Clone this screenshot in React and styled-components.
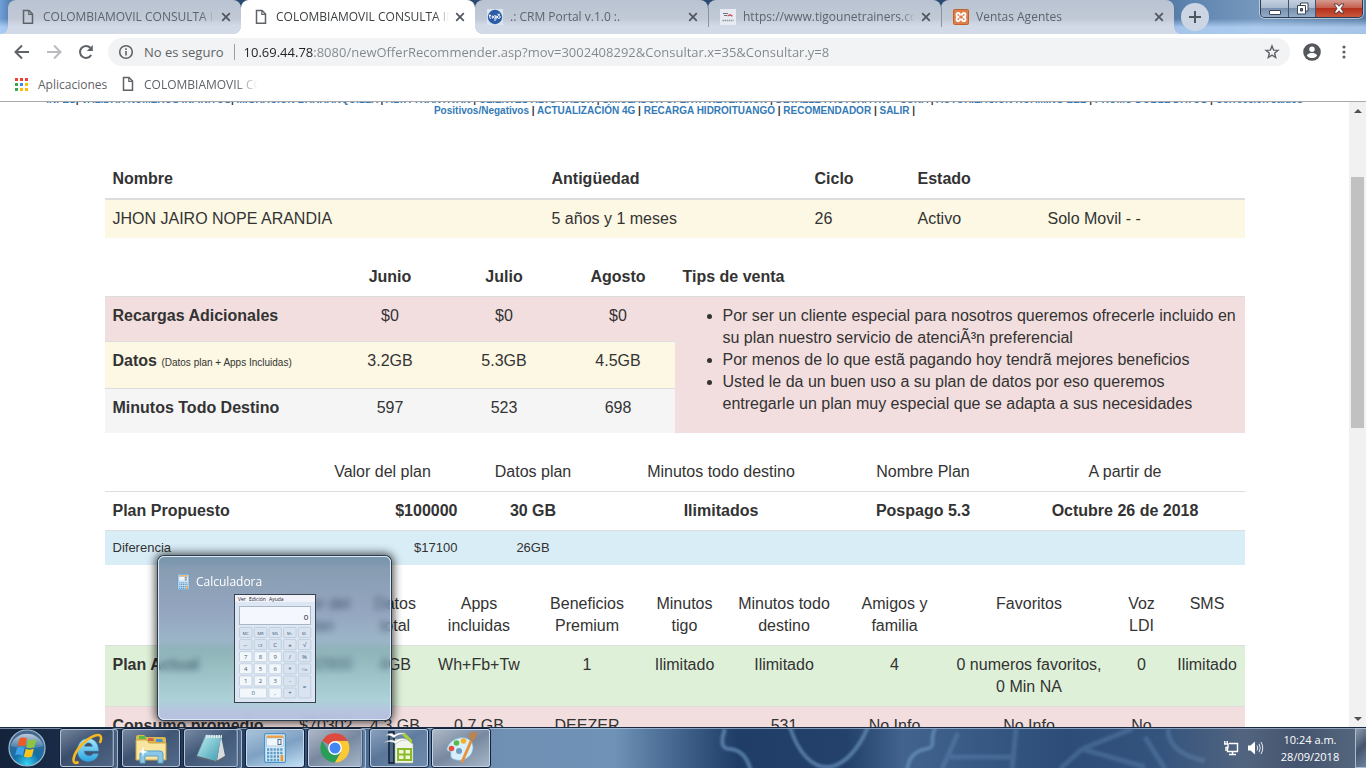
import React from 'react';
import styled, { createGlobalStyle, css } from 'styled-components';

const UI = '"Open Sans", "Noto Sans", sans-serif';
const PAGE = '"Liberation Sans", Arial, sans-serif';

const GlobalStyle = createGlobalStyle`
  * { box-sizing: border-box; }
  body { margin: 0; background: #fff; overflow: hidden; }
  button { border: 0; padding: 0; background: none; font: inherit; color: inherit; }
  svg { flex: none; }
`;

const Desktop = styled.div`
  display: flex;
  flex-direction: column;
  height: 100vh;
  font-family: ${UI};
`;

/* ---------- window frame ---------- */

const Frame = styled.header`
  display: flex;
  height: 34px;
  flex: none;
  padding-left: 8px;
  background:
    linear-gradient(to bottom, transparent 55%, rgba(190, 220, 255, 0.75) 80%),
    linear-gradient(to right, #6f9fd8 0, #2b4a72 2%, #2b4a72 80%, #5d84b0 87%, #7698bd 92%, #5a7ca4 100%);
`;

const TabBox = styled.div`
  position: relative;
  display: flex;
  align-items: center;
  flex: 0 1 233px;
  min-width: 0;
  height: 34px;
  padding: 0 7px 0 14px;
  border-radius: 8px 8px 0 0;
  color: #5c6470;
  --tab: #d3dae7;
  background: linear-gradient(to bottom, #b9c3d2, #c1c9d6 55%, #d3dae7 75%);
  ${(p) => p.$active && css`
    --tab: #fff;
    z-index: 1;
    flex-basis: 234px;
    color: #3c4043;
    background: #fff;
  `}
  &::before, &::after {
    content: '';
    position: absolute;
    bottom: 0;
    width: 8px;
    height: 8px;
  }
  &::before { left: -8px; background: radial-gradient(circle at 0 0, transparent 8px, var(--tab) 8px); }
  &::after { right: -8px; background: radial-gradient(circle at 100% 0, transparent 8px, var(--tab) 8px); }
`;

const TabIcon = styled.span`
  display: flex;
  justify-content: center;
  width: 16px;
  flex: none;
  margin-left: -2px;
`;

const TabTitle = styled.button`
  flex: 1;
  min-width: 0;
  margin-left: 7px;
  overflow: hidden;
  white-space: nowrap;
  text-align: left;
  font-size: 12px;
  line-height: 20px;
  mask-image: linear-gradient(to right, #000 calc(100% - 14px), transparent);
`;

const TabClose = styled.button`
  display: flex;
  justify-content: center;
  width: 16px;
  margin-left: 3px;
`;

const TabDivider = styled.span`
  align-self: center;
  width: 1px;
  height: 20px;
  margin-right: -1px;
  flex: none;
  z-index: 2;
  background: #8a929e;
`;

const NewTab = styled.button`
  display: flex;
  align-items: center;
  justify-content: center;
  width: 28px;
  height: 28px;
  margin: 3px 0 0 7px;
  flex: none;
  border-radius: 50%;
  background: #ccd5e3;
`;

const WindowButtons = styled.div`
  display: flex;
  height: 18px;
  margin: 0 3px 0 auto;
  border: 1px solid #2b3d55;
  border-top: 0;
  border-radius: 0 0 5px 5px;
  overflow: hidden;
  box-shadow: 0 0 0 1px rgba(255, 255, 255, 0.5);
`;

const WindowButton = styled.button`
  display: flex;
  align-items: center;
  justify-content: center;
  width: ${(p) => (p.$close ? 47 : 27)}px;
  border-left: 1px solid #42546c;
  background: ${(p) =>
    p.$close
      ? 'linear-gradient(to bottom, #d59a90, #c5604f 45%, #b5301b 50%, #c9573a 100%)'
      : 'linear-gradient(to bottom, #c4d0df, #a9bacf 45%, #7890ae 50%, #93acc9 100%)'};
  &:first-child { border-left: 0; }
`;

/* ---------- toolbar ---------- */

const Toolbar = styled.div`
  display: flex;
  align-items: center;
  gap: 12px;
  flex: none;
  height: 36px;
  padding: 0 12px;
  background: #fff;
`;

const IconButton = styled.button`
  display: flex;
  align-items: center;
  justify-content: center;
  width: 20px;
  height: 20px;
  flex: none;
`;

const Omnibox = styled.div`
  display: flex;
  align-items: center;
  flex: 1;
  height: 28px;
  padding: 0 10px;
  border-radius: 14px;
  background: #f1f3f4;
  font-size: 13px;
  color: #5f6368;
`;

const Security = styled.span`
  margin-left: 10px;
  padding-right: 10px;
  border-right: 1px solid #9aa0a6;
  line-height: 16px;
  white-space: nowrap;
`;

const Address = styled.input`
  flex: 1;
  min-width: 0;
  height: 20px;
  margin-left: 9px;
  padding: 0;
  border: 0;
  outline: 0;
  font-family: ${UI};
  font-size: 13px;
  color: transparent;
  background: linear-gradient(to right, #202124 70px, #80868b 70px);
  background-clip: text;
`;

const Bookmarks = styled.nav`
  display: flex;
  align-items: center;
  flex: none;
  height: 32px;
  padding: 0 15px 3px;
  border-bottom: 1px solid #a9a9ad;
  background: #fff;
`;

const Bookmark = styled.a`
  display: flex;
  align-items: center;
  gap: 10px;
  width: ${(p) => (p.$page ? 136 : 107)}px;
  overflow: hidden;
  white-space: nowrap;
  font-size: 12px;
  color: #5f6368;
  text-decoration: none;
  ${(p) => p.$page && css`mask-image: linear-gradient(to right, #000 114px, transparent 136px);`}
`;

/* ---------- page ---------- */

const Viewport = styled.div`
  display: flex;
  flex: 1;
  min-height: 0;
`;

const Page = styled.main`
  flex: 1;
  min-width: 0;
  overflow: hidden;
  background: #fff;
  color: #333;
  font-family: ${PAGE};
  font-size: 16px;
  line-height: 22px;
`;

const SiteMenu = styled.nav`
  margin-top: -8px;
  padding: 0 40px;
  text-align: center;
  font-size: 10px;
  line-height: 11px;
  font-weight: bold;
  color: #333;
`;

const SiteLink = styled.a`
  color: #337ab7;
  text-decoration: none;
`;

const Container = styled.div`
  max-width: 1140px;
  margin: 44px auto 0;
`;

const Table = styled.table`
  width: 100%;
  margin-bottom: 20px;
  table-layout: fixed;
  border-collapse: separate;
  border-spacing: 0;
`;

const Col = styled.col`
  width: ${(p) => (p.$w / 1140) * 100}%;
`;

const TONES = {
  yellow: '#fcf8e3',
  red: '#f2dede',
  gray: '#f5f5f5',
  blue: '#d9edf7',
  green: '#dff0d8',
};

const Row = styled.tr`
  background: ${(p) => TONES[p.$tone] || 'transparent'};
  ${(p) => p.$small && css`font-size: 13px; line-height: 18px;`}
`;

const cell = css`
  padding: 8px 7px 8px 8px;
  vertical-align: top;
  text-align: ${(p) => p.$align || 'center'};
`;

const Th = styled.th`
  ${cell}
  font-weight: ${(p) => (p.$plain ? 'normal' : 'bold')};
  ${(p) => p.$rule && css`border-bottom: 2px solid #ddd;`}
`;

const Td = styled.td`
  ${cell}
  ${(p) => !p.$flush && css`border-top: 1px solid #ddd;`}
  ${(p) => p.$bold && css`font-weight: bold;`}
  ${(p) => p.$tone && css`background: ${TONES[p.$tone]};`}
`;

const RowHead = styled(Td).attrs({ as: 'th', scope: 'row', $align: 'left' })`
  font-weight: ${(p) => (p.$plain ? 'normal' : 'bold')};
`;

const Note = styled.small`
  font-size: 10px;
  font-weight: normal;
`;

const Tips = styled.ul`
  margin: 0 0 10px;
  padding-left: 40px;
`;

const Scrollbar = styled.div`
  display: flex;
  flex-direction: column;
  align-items: center;
  width: 17px;
  flex: none;
  background: #f1f1f1;
`;

const Arrow = styled.button`
  display: flex;
  align-items: center;
  justify-content: center;
  width: 17px;
  height: 17px;
`;

const Track = styled.div`
  flex: 1;
  width: 13px;
  padding-top: 58px;
`;

const Thumb = styled.div`
  height: 47%;
  background: #c1c1c1;
`;

/* ---------- taskbar ---------- */

const Taskbar = styled.footer`
  position: relative;
  display: flex;
  align-items: center;
  flex: none;
  height: 41px;
  padding-left: 7px;
  border-top: 1px solid #1a2a3e;
  box-shadow: inset 0 1px 0 rgba(200, 220, 240, 0.55);
  background:
    linear-gradient(to right, #14233b 0, #1b2e4c 6%, #2b4668 20%, #4b6c93 27%, #7191b4 37%, #6f92b6 45%,
      #40618a 50%, #1f3d66 54%, #23416a 62%, #41638d 66%, #3a5c87 70%, #2d4d78 78%, #34547e 85%, #52647f 91%, #45546e 95%, #566880 100%);
`;

const Backdrop = styled.svg`
  position: absolute;
  top: 1px;
  right: 0;
  width: 746px;
  height: 39px;
`;

const StartButton = styled.button`
  display: flex;
  width: 40px;
  margin-right: 13px;
  flex: none;
`;

const TaskButton = styled.button`
  position: relative;
  display: flex;
  align-items: center;
  justify-content: center;
  width: ${(p) => (p.$stacked ? 54 : 58)}px;
  height: 38px;
  flex: none;
  margin-right: ${(p) => (p.$stacked ? 8 : 4)}px;
  border: 1px solid rgba(215, 230, 245, 0.75);
  border-radius: 3px;
  background: ${(p) =>
    p.$active
      ? 'linear-gradient(160deg, #a9c4dc, #7ea0c2 50%, #bfe0f5 100%)'
      : p.$lit
        ? 'linear-gradient(150deg, #aeb9c8, #78889f 50%, #a5b6c9)'
        : 'linear-gradient(150deg, rgba(190, 205, 225, 0.55), rgba(110, 130, 160, 0.4) 45%, rgba(130, 155, 185, 0.5))'};
  box-shadow: 0 0 0 1px #14233b;
  ${(p) => p.$stacked && css`
    &::after {
      content: '';
      position: absolute;
      top: -1px;
      right: -5px;
      width: 5px;
      height: 38px;
      border: 1px solid rgba(205, 220, 240, 0.7);
      border-left: 0;
      border-radius: 0 3px 3px 0;
      background: rgba(120, 145, 175, 0.5);
    }
  `}
`;

const Tray = styled.div`
  position: relative;
  display: flex;
  align-items: center;
  gap: 8px;
  height: 40px;
  margin-left: auto;
`;

const Clock = styled.time`
  width: 70px;
  margin-left: 3px;
  text-align: center;
  font-size: 11px;
  line-height: 17px;
  color: #fff;
`;

const ShowDesktop = styled.button`
  width: 11px;
  height: 40px;
  margin-left: 2px;
  border: 1px solid #a9bbcd;
  border-right: 0;
  background: linear-gradient(135deg, #8a99ab, #44556c 50%, #6d84a0);
`;

const Preview = styled.section`
  position: absolute;
  left: 158px;
  bottom: 48px;
  width: 233px;
  height: 164px;
  padding: 16px 18px;
  border: 1px solid #dbe9f5;
  border-radius: 6px;
  background: linear-gradient(to bottom, rgba(80, 112, 140, 0.7), rgba(84, 112, 154, 0.62) 35%, rgba(88, 140, 165, 0.58) 60%, rgba(130, 185, 215, 0.55) 88%, rgba(160, 180, 225, 0.7));
  backdrop-filter: blur(3px);
  box-shadow: 0 0 0 1px #2b3b4c, 0 0 8px 3px rgba(0, 0, 0, 0.65);
`;

const PreviewTitle = styled.h2`
  display: flex;
  align-items: center;
  gap: 6px;
  margin: 0;
  font-size: 12px;
  line-height: 18px;
  font-weight: normal;
  color: #fff;
`;

const PreviewImage = styled.svg`
  display: block;
  width: 82px;
  height: 109px;
  margin: 3px auto 0;
`;

/* ---------- icons ---------- */

const PageIcon = ({ color = '#5f6368' }) => (
  <svg width="12" height="16" viewBox="0 0 12 16" fill="none" stroke={color} strokeWidth="1.5">
    <path d="M1.5 1.5H7L10.5 5V14.2H1.5Z" />
    <path d="M6.8 1.5V5.3H10.5" strokeWidth="1.2" />
  </svg>
);

const CloseIcon = () => (
  <svg width="10" height="10" viewBox="0 0 10 10" stroke="#50565f" strokeWidth="1.7">
    <path d="M1.2 1.2 8.8 8.8M8.8 1.2 1.2 8.8" />
  </svg>
);

const TigoIcon = () => (
  <svg width="16" height="16" viewBox="0 0 16 16">
    <rect width="16" height="16" fill="#dce4ef" />
    <circle cx="8" cy="8" r="7.2" fill="#2a5ca8" />
    <g fill="none" stroke="#fff" strokeWidth="1">
      <path d="M2.8 5.5V8.6Q2.8 9.5 3.8 9.4M2 6.6H4M5.3 6.6V9.5" />
      <circle cx="7.8" cy="8" r="1.3" />
      <path d="M9.1 6.6V10.4Q8.8 11.3 7 11" />
      <circle cx="11.8" cy="8" r="1.4" />
      <path d="M10.5 5.3H13" />
    </g>
  </svg>
);

const TrainersIcon = () => (
  <svg width="16" height="16" viewBox="0 0 16 16">
    <rect width="16" height="16" fill="#e8ebf2" />
    <path d="M3 4.500H8M4 6.500H7" stroke="#6c7480" strokeWidth="1.200" />
    <path d="M7.500 6.800 10 5.800 12.500 7.200" stroke="#d0505e" strokeWidth="1.400" fill="none" />
    <path d="M2.500 11.500H13.500" stroke="#8f96a3" strokeWidth="1.600" strokeDasharray="1.500 .6" />
  </svg>
);

const XamppIcon = () => (
  <svg width="16" height="16" viewBox="0 0 16 16">
    <rect x=".5" y=".5" width="15" height="15" rx="1" fill="#dd7f4c" stroke="#c4622b" />
    <path
      d="M6.300 8C4.200 8 3.500 9 3.500 10.300S4.300 12.200 5.200 12.200 6.800 11.500 6.800 10.400H9.200C9.200 11.500 9.900 12.200 10.800 12.200S12.500 11.600 12.500 10.300 11.800 8 9.700 8M6.300 8C4.200 8 3.500 7 3.500 5.700S4.300 3.800 5.200 3.800 6.800 4.500 6.800 5.600H9.200C9.200 4.500 9.900 3.800 10.800 3.800S12.500 4.400 12.500 5.700 11.800 8 9.700 8"
      fill="none" stroke="#fff" strokeWidth="1.800"
    />
  </svg>
);

const BackIcon = ({ color = '#5f6368', flip }) => (
  <svg width="16" height="16" viewBox="0 0 16 16" fill="none" stroke={color} strokeWidth="2">
    <path d={flip ? 'M1 8H14M8 1.5 14.5 8 8 14.5' : 'M15 8H2M8 1.5 1.5 8 8 14.5'} />
  </svg>
);

const ReloadIcon = () => (
  <svg width="16" height="16" viewBox="0 0 16 16">
    <path d="M13.2 11A6 6 0 1 1 12.4 3.8" fill="none" stroke="#5f6368" strokeWidth="2" />
    <path d="M14.8 1V7H8.8Z" fill="#5f6368" />
  </svg>
);

const InfoIcon = () => (
  <svg width="16" height="16" viewBox="0 0 16 16" fill="none" stroke="#5f6368" strokeWidth="1.6">
    <circle cx="8" cy="8" r="6.3" />
    <path d="M8 7V11.5M8 4.3V6" />
  </svg>
);

const StarIcon = () => (
  <svg width="16" height="16" viewBox="0 0 16 16" fill="none" stroke="#5f6368" strokeWidth="1.4">
    <path d="M8 2 9.6 6.1 14 6.4 10.6 9.2 11.7 13.5 8 11.1 4.3 13.5 5.4 9.2 2 6.4 6.4 6.1Z" />
  </svg>
);

const ProfileIcon = () => (
  <svg width="18" height="18" viewBox="0 0 18 18">
    <circle cx="9" cy="9" r="8.8" fill="#54585d" />
    <circle cx="9" cy="6.2" r="2.7" fill="#fff" />
    <path d="M3.8 12.4C5 10.6 7 10 9 10S13 10.6 14.2 12.4C13 14.2 11 15.1 9 15.1S5 14.2 3.8 12.4Z" fill="#fff" />
  </svg>
);

const MenuIcon = () => (
  <svg width="4" height="14" viewBox="0 0 4 14" fill="#5f6368">
    <circle cx="2" cy="2" r="1.6" /><circle cx="2" cy="7" r="1.6" /><circle cx="2" cy="12" r="1.6" />
  </svg>
);

const APP_COLORS = ['#ea4335', '#ea4335', '#ea4335', '#34a853', '#4285f4', '#fbbc05', '#34a853', '#fbbc05', '#fbbc05'];
const AppsIcon = () => (
  <svg width="13" height="13" viewBox="0 0 13 13">
    {APP_COLORS.map((c, i) => <rect key={i} x={(i % 3) * 5} y={Math.floor(i / 3) * 5} width="3" height="3" fill={c} />)}
  </svg>
);

const StartOrb = () => (
  <svg width="40" height="38" viewBox="0 0 40 38">
    <defs>
      <radialGradient id="orb" cx=".5" cy=".95" r=".9">
        <stop offset="0" stopColor="#35d6f7" /><stop offset=".4" stopColor="#1470a8" /><stop offset="1" stopColor="#46678e" />
      </radialGradient>
      <linearGradient id="orbShine" x2="0" y2="1"><stop offset="0" stopColor="#fff" stopOpacity=".65" /><stop offset="1" stopColor="#fff" stopOpacity=".1" /></linearGradient>
    </defs>
    <circle cx="20" cy="19" r="18" fill="url(#orb)" stroke="#9fb9cf" strokeWidth="1.2" />
    <path d="M3.5 17A17 16 0 0 1 36.500 17Q20 22 3.500 17Z" fill="url(#orbShine)" />
    <path d="M12.600 9.500Q16.500 7.500 20 9.600L18 17.500Q14.500 15.500 10.500 17.300Z" fill="#ee5a24" />
    <path d="M21.300 10.300Q25 12 29.500 10.300L27.300 18.300Q23.500 20 19.300 18.200Z" fill="#8cc63e" />
    <path d="M10.100 18.800Q14 17 17.600 19L15.600 26.700Q12 24.500 8 26.500Z" fill="#3fa2e8" />
    <path d="M18.900 19.700Q22.800 21.500 26.900 19.800L24.900 27.600Q21 29.300 16.900 27.400Z" fill="#fcc419" />
  </svg>
);

const IeIcon = () => (
  <svg width="34" height="34" viewBox="0 0 34 34">
    <defs><linearGradient id="ie" x2="0" y2="1"><stop offset="0" stopColor="#a8e8fc" /><stop offset="1" stopColor="#2ba4e2" /></linearGradient></defs>
    <path d="M28.500 20H14C14.500 26 22 26 23 22.800H28.300C26 34 6.500 33 7.500 18.500C8.500 4 28.500 3 28.500 20ZM14.500 15.500H22.500C22 10.500 15 10.500 14.500 15.500Z" fill="url(#ie)" stroke="#3f9fd4" strokeWidth=".5" fillRule="evenodd" />
    <path d="M8.500 31C1 35 2 24 11.500 14S32 .5 31 8C30.900 9.500 30.400 10.800 29.800 12" fill="none" stroke="#f7b91c" strokeWidth="2.600" />
  </svg>
);

const ExplorerIcon = () => (
  <svg width="36" height="32" viewBox="0 0 36 32">
    <path d="M3 5Q3 3 5 3H11L13 5H31Q33 5 33 7V27H3Z" fill="#d9b84f" />
    <path d="M6 4H12L13 7H6Z" fill="#58b947" /><path d="M15 6H20L21 9H15Z" fill="#d85d45" /><path d="M23 7H29L30 10H23Z" fill="#4992cf" />
    <path d="M3 8H14L16 11H33V28H3Z" fill="#f8e6a0" stroke="#c9a347" />
    <path d="M7 31V22Q7 19 10 19H27Q30 19 30 22V31H25V24H12V31Z" fill="#8ac8e8" stroke="#5c9fc5" />
    <path d="M10 14 10.800 18.500 15 20 10.800 21 10 25 9.200 21 6 20 9.200 18.500Z" fill="#fff" />
  </svg>
);

const NotepadIcon = () => (
  <svg width="34" height="34" viewBox="0 0 34 34">
    <defs><linearGradient id="note" x2="1" y2="1"><stop offset="0" stopColor="#c5f0f3" /><stop offset="1" stopColor="#3a9cb0" /></linearGradient></defs>
    <path d="M27 5 31 25 23 30Z" fill="#d7dcde" /><path d="M12 4 27 5 22 30 3 25Z" fill="url(#note)" stroke="#83b4bf" strokeWidth=".7" />
    <path d="M22 30 31 25 31 27 23 31 3 27V25Z" fill="#5d6670" />
    <path d="M12 5.500H28" stroke="#e9e9e9" strokeWidth="3" strokeDasharray="1.500 1" />
  </svg>
);

const CalcIcon = ({ width = 22, height = 30 }) => (
  <svg width={width} height={height} viewBox="0 0 22 30">
    <rect x=".6" y=".6" width="20.800" height="28.800" rx="1.500" fill="#d8eaf7" stroke="#4993c8" strokeWidth="1.200" />
    <rect x="2.500" y="2.500" width="17" height="2.500" fill="#f2a03f" />
    <rect x="2.500" y="5" width="17" height="8" fill="#eff6fb" stroke="#93b9d5" strokeWidth=".6" />
    <rect x="14" y="6.500" width="3" height="5" fill="none" stroke="#5d6d89" strokeWidth="1" />
    <path d="M3 16.500H19M3 20H19M3 23.500H16M3 27H16" stroke="#5c9bc6" strokeWidth="2.300" strokeDasharray="2.300 1" />
    <rect x="16.500" y="22" width="2.700" height="6" fill="#f0952e" />
  </svg>
);

const ChromeIcon = () => (
  <svg width="30" height="30" viewBox="0 0 30 30">
    <path d="M15 15 2.300 7.700A14.600 14.600 0 0 1 27.700 7.700H15Z" fill="#dd4b3e" />
    <path d="M15 8H27.700A14.600 14.600 0 0 1 14.800 29.600L21 19Z" fill="#fcc934" />
    <path d="M2.300 7.700 9 19 15 22 20.500 19 14.800 29.600A14.600 14.600 0 0 1 2.300 7.700Z" fill="#2a9d57" />
    <circle cx="15" cy="15" r="6.900" fill="#fff" /><circle cx="15" cy="15" r="5.500" fill="#4285f4" />
  </svg>
);

const CalcSheetIcon = () => (
  <svg width="34" height="34" viewBox="0 0 34 34">
    <path d="M7 1H12V32H7Z" fill="#4a6a8c" stroke="#101d30" strokeWidth="1.500" />
    <path d="M13 8H25L31 13V32H13Z" fill="#f2f5ee" stroke="#9ab17c" strokeWidth=".6" />
    <path d="M22 1 30 9V13L20 4Z" fill="#a7cf3a" />
    <path d="M15 17H30V30H15Z" fill="#8ab929" />
    <path d="M17 19H21.500V22.500H17ZM23.500 19H28V22.500H23.500ZM17 24.500H21.500V28H17ZM23.500 24.500H28V28H23.500Z" fill="#eef6d3" />
    <path d="M3 5Q9 0 12 4 18 0 24 3 15 3 12 7 8 3 3 5ZM1 12Q9 7 13 10 19 5 27 9 18 8 14 13 9 9 1 12Z" fill="#fff" stroke="#7f8c9b" strokeWidth=".4" />
  </svg>
);

const PaintIcon = () => (
  <svg width="34" height="34" viewBox="0 0 34 34">
    <path d="M15 7C24 5 30 11 29 18 28 27 17 32 9 28 5 26 8 22 6 20 3 21 2 18 4 15 6 11 10 8 15 7Z" fill="#d7effa" stroke="#7db3d5" strokeWidth=".8" />
    <circle cx="7.500" cy="17.500" r="2.800" fill="#e2513d" /><circle cx="12.500" cy="12" r="2.800" fill="#59b947" /><circle cx="19.500" cy="10" r="2.800" fill="#f3b229" />
    <circle cx="15" cy="20" r="3" fill="#6f9dc2" />
    <path d="M26 9 28.500 10.500 19 32 16.500 31Z" fill="#e8913a" />
    <path d="M24.500 6C24 2 29 0 33 1.500 33 5 31 9 28 10.500Z" fill="#b98352" />
  </svg>
);

const NetworkIcon = () => (
  <svg width="16" height="16" viewBox="0 0 16 16" fill="none" stroke="#fff" strokeWidth="1.400">
    <path d="M6 3.500H14.500V11.500H4.500V8M6 14.500H13M9.500 12V14.500" />
    <path d="M1 4H5V7.500H3V11" /><path d="M1.800 1V4M4.200 1V4" />
  </svg>
);

const VolumeIcon = () => (
  <svg width="17" height="16" viewBox="0 0 17 16">
    <path d="M1 5.500H3.500L8 1.500V14.500L3.500 10.500H1Z" fill="#fff" />
    <path d="M10 5.500Q11.500 8 10 10.500M12 3.800Q14.500 8 12 12.200M14 2Q17.500 8 14 14" fill="none" stroke="#e7edf4" strokeWidth="1" />
  </svg>
);

const KEYS = [
  ['MC', 'MR', 'MS', 'M+', 'M-'],
  ['←', 'CE', 'C', '±', '√'],
  ['7', '8', '9', '/', '%'],
  ['4', '5', '6', '*', '1/x'],
  ['1', '2', '3', '-', ''],
  ['', '', ',', '+', ''],
];

const Key = ({ x, y, w = 12.5, h = 10, label, light }) => (
  <g>
    <rect x={x} y={y} width={w} height={h} rx="1" fill={light ? '#f2f7fc' : '#d9e4f0'} stroke="#aebfd1" strokeWidth=".6" />
    <text x={x + w / 2} y={y + h / 2 + 2} fontSize={label.length > 1 ? 4 : 6} textAnchor="middle" fill="#3d5878">{label}</text>
  </g>
);

const CalculatorThumb = () => (
  <PreviewImage viewBox="0 0 82 109" fontFamily={UI} role="img" aria-label="Calculadora">
    <rect x=".5" y=".5" width="81" height="108" fill="#dce7f3" stroke="#38434f" />
    <rect x="1" y="1" width="80" height="7" fill="#f2f3fa" />
    <g fontSize="5" fill="#222"><text x="4" y="6.500">Ver</text><text x="15" y="6.500">Edición</text><text x="35" y="6.500">Ayuda</text></g>
    <rect x="5.500" y="12.500" width="71" height="18" fill="#f4f8fe" stroke="#a9b7c8" />
    <text x="72" y="26" fontSize="8" textAnchor="middle" fill="#222">0</text>
    {KEYS.map((row, r) => row.map((k, c) => k && (
      <Key key={`${r}-${c}`} x={5.5 + c * 14.7} y={33.5 + r * 12.1} label={k} light={(r > 1 && c < 3) || k === ','} />
    )))}
    <Key x={5.5} y={94} w={27.2} label="0" light />
    <Key x={64.3} y={81.9} h={22.1} label="=" />
  </PreviewImage>
);

const Gears = () => (
  <Backdrop viewBox="0 0 746 39" aria-hidden="true">
    <defs><filter id="soft"><feGaussianBlur stdDeviation="1" /></filter></defs>
    <g fill="none" stroke="#6d97c2" filter="url(#soft)">
      <g strokeOpacity=".65" strokeWidth="4">
        <path d="M105 0C100 14 102 20 110 20 122 21 128 30 131 42" />
        <path d="M170 -2C178 24 192 38 207 38S238 22 248 -2" />
        <path d="M316 -2C308 10 318 18 306 20 294 22 288 30 287 42" />
      </g>
      <g strokeOpacity=".3" strokeWidth="5">
        <path d="M322 40 338 4M330 28H396M396 0 392 40M462 20 512 0M462 20 525 38M462 20 440 40M525 8 545 40M548 0Q548 24 585 32" />
      </g>
    </g>
  </Backdrop>
);

/* ---------- content ---------- */

const TABS = [
  { title: 'COLOMBIAMOVIL CONSULTA INTEGRAL', icon: <PageIcon /> },
  { title: 'COLOMBIAMOVIL CONSULTA INTEGRAL', icon: <PageIcon />, active: true },
  { title: '.: CRM Portal v.1.0 :.', icon: <TigoIcon />, divider: true },
  { title: 'https://www.tigounetrainers.com', icon: <TrainersIcon />, divider: true },
  { title: 'Ventas Agentes', icon: <XamppIcon /> },
];

const LINKS = [
  ['INFES', '| '], ['VALIDAR NUMEROS INFINITOS', '| '], ['MIGRACION BARRANQUILLA', ' | '], ['ALTA TRANTIVAN', ' | '],
  ['CLIENTES ALTO VALOR', ' | '], ['SIMULADOR OFERTA RETENCION', ' | '], ['DETALLE FACTURA HW - CUNA', ' | '],
  ['AUTORIZACION ROAMING EEE', ' | '], ['PROMO DOBLE DATOS', ' | '], ['Corrección saldos Positivos/Negativos', ' | '],
  ['ACTUALIZACIÓN 4G', ' | '], ['RECARGA HIDROITUANGO', ' | '], ['RECOMENDADOR', ' | '], ['SALIR', ' |'],
];

const Cols = ({ widths }) => (
  <colgroup>{widths.map((w, i) => <Col key={i} $w={w} />)}</colgroup>
);

const USAGE_HEAD = ['Valor del plan', 'Datos total', 'Apps incluidas', 'Beneficios Premium', 'Minutos tigo', 'Minutos todo destino', 'Amigos y familia', 'Favoritos', 'Voz LDI', 'SMS'];
const CURRENT = ['$82900', '4GB', 'Wh+Fb+Tw', '1', 'Ilimitado', 'Ilimitado', '4', '0 numeros favoritos, 0 Min NA', '0', 'Ilimitado'];
const AVERAGE = ['$70302', '4.3 GB', '0.7 GB', 'DEEZER', '', '531', 'No Info', 'No Info', 'No Info', ''];

const UsageCells = ({ values }) => values.map((v, i) => <Td key={i} $align={i === 0 ? 'right' : 'center'}>{v}</Td>);

export default function App() {
  return (
    <Desktop>
      <GlobalStyle />
      <Frame>
        {TABS.map((t, i) => (
          <React.Fragment key={i}>
            <TabBox $active={t.active}>
              <TabIcon>{t.icon}</TabIcon>
              <TabTitle>{t.title}</TabTitle>
              <TabClose aria-label="Cerrar pestaña"><CloseIcon /></TabClose>
            </TabBox>
            {t.divider && <TabDivider />}
          </React.Fragment>
        ))}
        <NewTab aria-label="Nueva pestaña">
          <svg width="12" height="12" viewBox="0 0 12 12" stroke="#50565f" strokeWidth="2"><path d="M6 0V12M0 6H12" /></svg>
        </NewTab>
        <WindowButtons>
          <WindowButton aria-label="Minimizar">
            <svg width="12" height="14" viewBox="0 0 12 14"><rect x=".5" y="8.500" width="11" height="4" rx=".5" fill="#fff" stroke="#3c4656" /></svg>
          </WindowButton>
          <WindowButton aria-label="Restaurar">
            <svg width="13" height="13" viewBox="0 0 13 13" fill="#fff" stroke="#3c4656">
              <path d="M4.500 1H12V9H4.500Z" /><path d="M1.500 3.500H9.500V12H1.500Z" /><path d="M4.500 6.500H6.500V9H4.500Z" fill="#5b7391" />
            </svg>
          </WindowButton>
          <WindowButton $close aria-label="Cerrar">
            <svg width="12" height="11" viewBox="0 0 12 11"><path d="M1 1H4L6 3.300 8 1H11L8 5.500 11 10H8L6 7.700 4 10H1L4 5.500Z" fill="#fff" stroke="#4e3434" strokeWidth=".9" /></svg>
          </WindowButton>
        </WindowButtons>
      </Frame>

      <Toolbar>
        <IconButton aria-label="Atrás"><BackIcon /></IconButton>
        <IconButton aria-label="Adelante"><BackIcon color="#b9bbbe" flip /></IconButton>
        <IconButton aria-label="Recargar"><ReloadIcon /></IconButton>
        <Omnibox>
          <InfoIcon />
          <Security>No es seguro</Security>
          <Address aria-label="Dirección" readOnly value="10.69.44.78:8080/newOfferRecommender.asp?mov=3002408292&Consultar.x=35&Consultar.y=8" />
          <StarIcon />
        </Omnibox>
        <IconButton aria-label="Perfil"><ProfileIcon /></IconButton>
        <IconButton aria-label="Menú"><MenuIcon /></IconButton>
      </Toolbar>

      <Bookmarks>
        <Bookmark href="#apps"><AppsIcon />Aplicaciones</Bookmark>
        <Bookmark href="#consulta" $page><PageIcon />COLOMBIAMOVIL CONSULTA</Bookmark>
      </Bookmarks>

      <Viewport>
        <Page>
          <SiteMenu>
            {LINKS.map(([label, sep]) => (
              <React.Fragment key={label}><SiteLink href="#menu">{label}</SiteLink>{sep}</React.Fragment>
            ))}
          </SiteMenu>
          <Container>
            <Table>
              <Cols widths={[439, 263, 103, 130, 205]} />
              <thead>
                <tr>
                  {['Nombre', 'Antigüedad', 'Ciclo', 'Estado', ''].map((h, i) => <Th key={i} $align="left" $rule>{h}</Th>)}
                </tr>
              </thead>
              <tbody>
                <Row $tone="yellow">
                  {['JHON JAIRO NOPE ARANDIA', '5 años y 1 meses', '26', 'Activo', 'Solo Movil - -'].map((v) => (
                    <Td key={v} $align="left" $flush>{v}</Td>
                  ))}
                </Row>
              </tbody>
            </Table>

            <Table>
              <Cols widths={[228, 114, 114, 114, 570]} />
              <thead>
                <tr><Th /><Th>Junio</Th><Th>Julio</Th><Th>Agosto</Th><Th $align="left">Tips de venta</Th></tr>
              </thead>
              <tbody>
                <Row $tone="red">
                  <RowHead>Recargas Adicionales</RowHead><Td>$0</Td><Td>$0</Td><Td>$0</Td>
                  <Td rowSpan={3} $align="left" $tone="red">
                    <Tips>
                      <li>Por ser un cliente especial para nosotros queremos ofrecerle incluido en su plan nuestro servicio de atenciÃ³n preferencial</li>
                      <li>Por menos de lo que estã pagando hoy tendrã mejores beneficios</li>
                      <li>Usted le da un buen uso a su plan de datos por eso queremos entregarle un plan muy especial que se adapta a sus necesidades</li>
                    </Tips>
                  </Td>
                </Row>
                <Row $tone="yellow">
                  <RowHead>Datos <Note>(Datos plan + Apps Incluidas)</Note></RowHead><Td>3.2GB</Td><Td>5.3GB</Td><Td>4.5GB</Td>
                </Row>
                <Row $tone="gray">
                  <RowHead>Minutos Todo Destino</RowHead><Td>597</Td><Td>523</Td><Td>698</Td>
                </Row>
              </tbody>
            </Table>

            <Table>
              <Cols widths={[195, 165, 136, 240, 164, 240]} />
              <thead>
                <tr>
                  {['', 'Valor del plan', 'Datos plan', 'Minutos todo destino', 'Nombre Plan', 'A partir de'].map((h) => <Th key={h} $plain>{h}</Th>)}
                </tr>
              </thead>
              <tbody>
                <Row>
                  <RowHead>Plan Propuesto</RowHead>
                  <Td $bold $align="right">$100000</Td><Td $bold>30 GB</Td><Td $bold>Ilimitados</Td><Td $bold>Pospago 5.3</Td><Td $bold>Octubre 26 de 2018</Td>
                </Row>
                <Row $tone="blue" $small>
                  <RowHead $plain>Diferencia</RowHead>
                  <Td $align="right">$17100</Td><Td>26GB</Td><Td /><Td /><Td />
                </Row>
              </tbody>
            </Table>

            <Table>
              <Cols widths={[173, 82, 70, 98, 118, 77, 122, 99, 170, 55, 76]} />
              <thead>
                <tr><Th />{USAGE_HEAD.map((h) => <Th key={h} $plain>{h}</Th>)}</tr>
              </thead>
              <tbody>
                <Row $tone="green"><RowHead>Plan Actual</RowHead><UsageCells values={CURRENT} /></Row>
                <Row $tone="red"><RowHead>Consumo promedio</RowHead><UsageCells values={AVERAGE} /></Row>
              </tbody>
            </Table>
          </Container>
        </Page>
        <Scrollbar>
          <Arrow aria-label="Subir"><svg width="8" height="4" viewBox="0 0 8 4"><path d="M0 4 4 0 8 4Z" fill="#505050" /></svg></Arrow>
          <Track><Thumb /></Track>
          <Arrow aria-label="Bajar"><svg width="8" height="4" viewBox="0 0 8 4"><path d="M0 0H8L4 4Z" fill="#505050" /></svg></Arrow>
        </Scrollbar>
      </Viewport>

      <Taskbar>
        <Gears />
        <StartButton aria-label="Inicio"><StartOrb /></StartButton>
        <TaskButton $stacked aria-label="Internet Explorer"><IeIcon /></TaskButton>
        <TaskButton aria-label="Explorador de Windows"><ExplorerIcon /></TaskButton>
        <TaskButton $stacked aria-label="Bloc de notas"><NotepadIcon /></TaskButton>
        <TaskButton $active aria-label="Calculadora"><CalcIcon /></TaskButton>
        <TaskButton $stacked $lit aria-label="Google Chrome"><ChromeIcon /></TaskButton>
        <TaskButton aria-label="OpenOffice Calc"><CalcSheetIcon /></TaskButton>
        <TaskButton $lit aria-label="Paint"><PaintIcon /></TaskButton>
        <Tray>
          <NetworkIcon />
          <VolumeIcon />
          <Clock>10:24 a.m.<br />28/09/2018</Clock>
          <ShowDesktop aria-label="Mostrar escritorio" />
        </Tray>
      </Taskbar>

      <Preview>
        <PreviewTitle><CalcIcon width={13} height={16} />Calculadora</PreviewTitle>
        <CalculatorThumb />
      </Preview>
    </Desktop>
  );
}
